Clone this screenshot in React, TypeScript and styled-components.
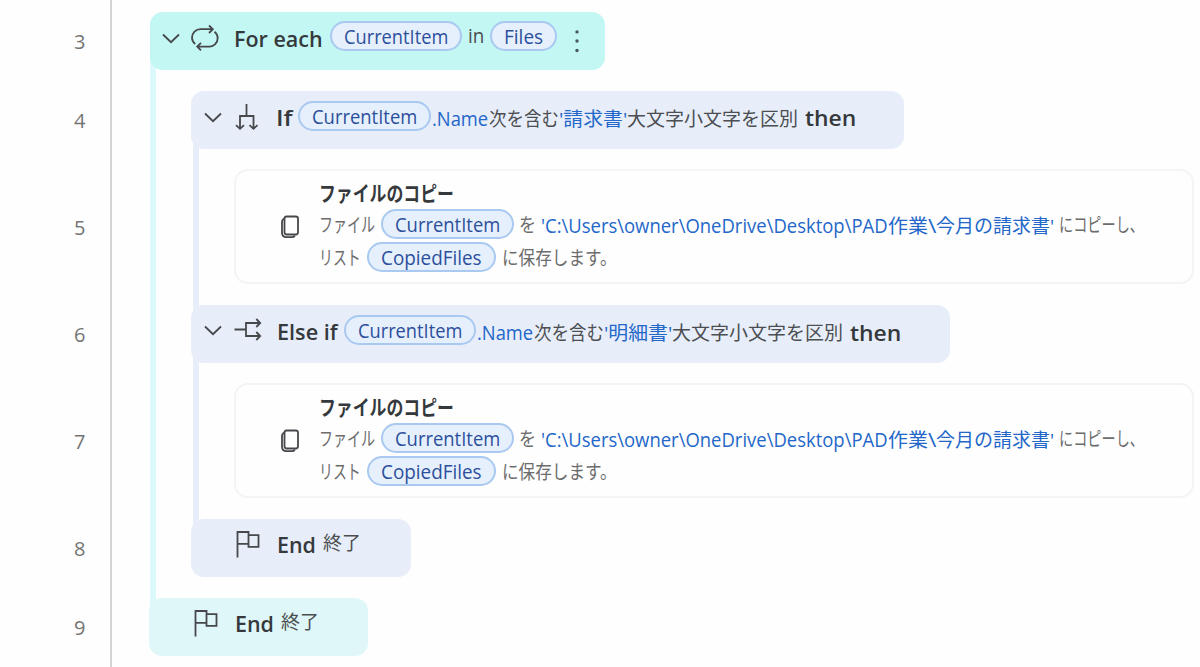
import { ReactNode, useLayoutEffect, useRef, useState } from 'react';
import styled, { createGlobalStyle } from 'styled-components';

const GlobalStyle = createGlobalStyle`
  * {
    box-sizing: border-box;
  }

  body {
    margin: 0;
    background: #fefefe;
    overflow: hidden;
    font-family: 'Open Sans', 'Noto Sans CJK JP', sans-serif;
  }
`;

const Designer = styled.div`
  display: flex;
  width: 1200px;
  height: 667px;
  overflow: hidden;
`;

const Gutter = styled.div`
  display: flex;
  flex-direction: column;
  gap: 21px;
  width: 112px;
  flex-shrink: 0;
  padding-top: 12.5px;
  border-right: 2px solid #d4d4d4;
`;

const LineNumber = styled.div<{ $tall?: boolean }>`
  display: flex;
  align-items: center;
  justify-content: center;
  height: ${({ $tall }) => ($tall ? '114px' : '58px')};
  flex-shrink: 0;
  padding-left: 49px;
`;

const Flow = styled.div`
  flex: 1;
  padding: 12px 0 0 38px;
`;

const Nested = styled.div<{ $color: string; $offset: number; $indent: number }>`
  display: flex;
  flex-direction: column;
  gap: 21px;
  margin: -14px 0 -14px ${({ $offset }) => $offset}px;
  padding: 35px 0 35px ${({ $indent }) => $indent}px;
  border-left: 6px solid ${({ $color }) => $color};
`;

const Block = styled.div<{ $width: number; $color: string }>`
  position: relative;
  display: flex;
  align-items: flex-start;
  width: ${({ $width }) => $width}px;
  height: 58px;
  border-radius: 13px;
  background: ${({ $color }) => $color};
`;

const LoopEnd = styled.div`
  margin: -1px 0 0 -1px;
`;

const Card = styled.div`
  display: flex;
  width: 960px;
  height: 115px;
  margin: -1px 0 0 35px;
  border: 2px solid #f4f4f4;
  border-radius: 14px;
  background: #fefefe;
`;

const CardText = styled.div`
  padding: 6px 0 0 19px;
`;

const CardLine = styled.div<{ $height: number }>`
  display: flex;
  height: ${({ $height }) => $height}px;
`;

const Icon = styled.svg<{ $left: number; $top: number }>`
  flex-shrink: 0;
  margin: ${({ $top, $left }) => `${$top}px 0 0 ${$left}px`};
  fill: none;
  stroke: #46484b;
  stroke-width: 1.8;
`;

const Slot = styled.span<{ $width: number; $left: number; $top: number; $size: number; $color: string; $weight: number }>`
  display: block;
  flex-shrink: 0;
  width: ${({ $width }) => $width}px;
  height: 30px;
  margin: ${({ $top, $left }) => `${$top}px 0 0 ${$left}px`};
  line-height: 30px;
  white-space: nowrap;
  font-size: ${({ $size }) => $size}px;
  font-weight: ${({ $weight }) => $weight};
  color: ${({ $color }) => $color};
`;

const Stretch = styled.span`
  display: inline-block;
  vertical-align: top;
  line-height: 30px;
  transform-origin: 0 50%;
`;

const PillBox = styled.span<{ $left: number; $top: number }>`
  display: flex;
  flex-shrink: 0;
  height: 30px;
  margin: ${({ $top, $left }) => `${$top}px 0 0 ${$left}px`};
  padding: 0 12px;
  border: 2px solid #a9c9f0;
  border-radius: 15px;
  background: #e6f0fd;
`;

const INK = '#36393c';
const TEXT = '#4c4e52';
const MUTED = '#6c6c6c';
const LINK = '#2367c9';
const PILL = '#2c4f9c';
const TEAL = '#c3f7f3';
const PALE_TEAL = '#dff7f8';
const BLUE = '#e7eef9';

interface FitProps {
  width: number;
  left?: number;
  top?: number;
  size?: number;
  color?: string;
  weight?: number;
  children: ReactNode;
}

// Condenses a run of text to the width reserved for it.
function Fit({ width, left = 0, top = 0, size = 20, color = TEXT, weight = 400, children }: FitProps) {
  const ref = useRef<HTMLSpanElement>(null);
  const [scale, setScale] = useState(1);

  useLayoutEffect(() => {
    if (ref.current) setScale(width / ref.current.offsetWidth);
  }, [width]);

  return (
    <Slot $width={width} $left={left} $top={top} $size={size} $color={color} $weight={weight}>
      <Stretch ref={ref} style={{ transform: `scaleX(${scale})` }}>
        {children}
      </Stretch>
    </Slot>
  );
}

function Keyword({ width, left, top, children }: { width: number; left: number; top: number; children: ReactNode }) {
  return (
    <Fit width={width} left={left} top={top} size={22} weight={650} color={INK}>
      {children}
    </Fit>
  );
}

function Pill({ name, width, left, top }: { name: string; width: number; left: number; top: number }) {
  return (
    <PillBox $left={left} $top={top}>
      <Fit width={width} top={-1} color={PILL}>
        {name}
      </Fit>
    </PillBox>
  );
}

function Line({ n, tall }: { n: number; tall?: boolean }) {
  return (
    <LineNumber $tall={tall}>
      <Fit width={11} size={20} color="#747474">{n}</Fit>
    </LineNumber>
  );
}

const Chevron = ({ left, top }: { left: number; top: number }) => (
  <Icon $left={left} $top={top} width="18" height="11" viewBox="0 0 18 11">
    <path d="M1 1.5 9 9.2 17 1.5" />
  </Icon>
);

const LoopIcon = () => (
  <Icon $left={11} $top={12} width="29" height="28" viewBox="0 0 29 28">
    <path d="M4.200 20C2.200 18.400 1 16.300 1 13.800 1 9 4.800 5.200 9.500 5.200H21.500M18 1.500 21.800 5.200 18 9" />
    <path d="M23.500 7.800c2 1.600 3.200 3.700 3.200 6.200 0 4.800-3.800 8.600-8.500 8.600H6.500M10 18.900 6.200 22.600 10 26.400" />
  </Icon>
);

const BranchIcon = () => (
  <Icon $left={13} $top={12} width="25" height="28" viewBox="0 0 25 28">
    <path d="M11.500 1V13M5 25.500V13H18.500V25.500M1 22.200 5 25.800 9 22.200M14.500 22.200 18.500 25.800 22.500 22.200" />
  </Icon>
);

const ElseIcon = () => (
  <Icon $left={12} $top={12} width="28" height="25" viewBox="0 0 28 25">
    <path d="M0.500 12.500H12M26 6H12V19H26M22.300 2 26.200 6 22.300 10M22.300 15 26.200 19 22.300 23" />
  </Icon>
);

const FlagIcon = () => (
  <Icon $left={44} $top={12} width="25" height="28" viewBox="0 0 25 28">
    <path d="M2.500 26.500V1H13.500V12.800H2.500M13.500 4.200H23.500V15.800H13.500V12.500" />
  </Icon>
);

const CopyIcon = () => (
  <Icon $left={44} $top={44} width="20" height="25" viewBox="0 0 20 25">
    <rect x="4.500" y="1.500" width="13.500" height="18" rx="2.200" />
    <path d="M4.500 3.500Q2 4.500 2 7V17.500Q2 22.200 6.500 22.200H12Q14 22.200 14.800 20.500" />
  </Icon>
);

const DotsIcon = () => (
  <Icon $left={18} $top={18} width="4" height="24" viewBox="0 0 4 24">
    <g fill="#47595a" stroke="none">
      <circle cx="2" cy="1.900" r="1.700" />
      <circle cx="2" cy="11" r="1.700" />
      <circle cx="2" cy="20.500" r="1.700" />
    </g>
  </Icon>
);

function Condition({ value }: { value: string }) {
  return (
    <>
      <Fit width={56} left={1} top={13} color={LINK}>.Name</Fit>
      <Fit width={70} left={1} top={13} size={19}>次を含む</Fit>
      <Fit width={68} top={13} size={19} color={LINK}>{`'${value}'`}</Fit>
      <Fit width={171} top={13} size={19}>大文字小文字を区別</Fit>
    </>
  );
}

function CopyAction() {
  return (
    <Card>
      <CopyIcon />
      <CardText>
        <CardLine $height={32}>
          <Fit width={135} top={1} size={21} weight={600} color={INK}>ファイルのコピー</Fit>
        </CardLine>
        <CardLine $height={33}>
          <Fit width={56} top={1} size={19.5} color={MUTED}>ファイル</Fit>
          <Pill name="CurrentItem" width={105} left={6} top={0} />
          <Fit width={17} left={5} top={1} size={19} color={MUTED}>を</Fit>
          <Fit width={347} left={4.5} top={1.5} color={LINK}>{"'C:\\Users\\owner\\OneDrive\\Desktop\\PAD"}</Fit>
          <Fit width={40} left={0.5} top={1.5} size={19} color={LINK}>作業</Fit>
          <Fit width={8} top={1.5} color={LINK}>{'\\'}</Fit>
          <Fit width={118} top={1.5} size={19} color={LINK}>今月の請求書'</Fit>
          <Fit width={85} left={5} top={1} size={19.5} color={MUTED}>にコピーし、</Fit>
        </CardLine>
        <CardLine $height={33}>
          <Fit width={42} top={1} size={19.5} color={MUTED}>リスト</Fit>
          <Pill name="CopiedFiles" width={101} left={6} top={0} />
          <Fit width={115} left={6} top={1} size={19.5} color={MUTED}>に保存します。</Fit>
        </CardLine>
      </CardText>
    </Card>
  );
}

function EndBlock({ width, color }: { width: number; color: string }) {
  return (
    <Block $width={width} $color={color}>
      <FlagIcon />
      <Keyword width={39} left={17} top={10}>End</Keyword>
      <Fit width={38} left={7} top={9} size={19}>終了</Fit>
    </Block>
  );
}

export default function App() {
  return (
    <>
      <GlobalStyle />
      <Designer>
        <Gutter>
          <Line n={3} />
          <Line n={4} />
          <Line n={5} tall />
          <Line n={6} />
          <Line n={7} tall />
          <Line n={8} />
          <Line n={9} />
        </Gutter>
        <Flow>
          <Block $width={455} $color={TEAL}>
            <Chevron left={12} top={21} />
            <LoopIcon />
            <Keyword width={89} left={14} top={11}>For each</Keyword>
            <Pill name="CurrentItem" width={104} left={7} top={9} />
            <Fit width={16} left={6} top={9}>in</Fit>
            <Pill name="Files" width={39} left={6} top={9} />
            <DotsIcon />
          </Block>
          <Nested $color="#dbf8fb" $offset={0} $indent={35}>
            <div>
              <Block $width={713} $color={BLUE}>
                <Chevron left={13} top={21} />
                <BranchIcon />
                <Keyword width={17} left={16} top={11}>If</Keyword>
                <Pill name="CurrentItem" width={105} left={5} top={10} />
                <Condition value="請求書" />
                <Keyword width={51} left={7} top={11}>then</Keyword>
              </Block>
              <Nested $color={BLUE} $offset={2} $indent={0}>
                <CopyAction />
              </Nested>
              <Block $width={759} $color={BLUE}>
                <Chevron left={13} top={20} />
                <ElseIcon />
                <Keyword width={61} left={15} top={11}>Else if</Keyword>
                <Pill name="CurrentItem" width={104} left={6} top={10} />
                <Condition value="明細書" />
                <Keyword width={51} left={7} top={12}>then</Keyword>
              </Block>
              <Nested $color={BLUE} $offset={2} $indent={0}>
                <CopyAction />
              </Nested>
              <EndBlock width={220} color={BLUE} />
            </div>
          </Nested>
          <LoopEnd>
            <EndBlock width={219} color={PALE_TEAL} />
          </LoopEnd>
        </Flow>
      </Designer>
    </>
  );
}
